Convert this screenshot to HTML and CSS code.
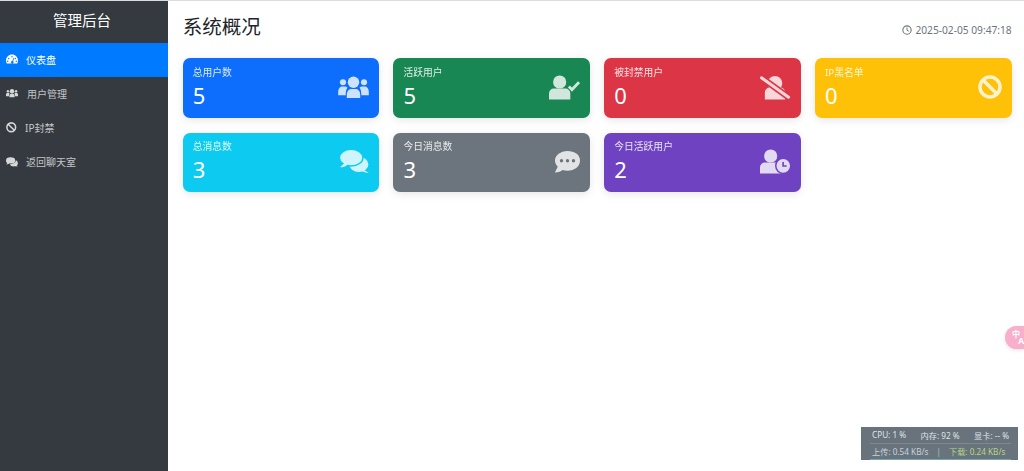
FILE: index.html
```html
<!DOCTYPE html>
<html lang="zh-CN">
<head>
<meta charset="utf-8">
<title>系统概况</title>
<link rel="stylesheet" href="styles.css">
</head>
<body>
<div class="layout">
  <aside class="sidebar">
    <div class="brand">管理后台</div>
    <nav class="nav">
      <a class="nav-item active"><svg class="nav-icon" viewBox="0 0 24 20"><path fill-rule="evenodd" d="M12 1C5.500 1 0 6.500 0 13c0 2.200.6 4.200 1.600 6h20.800c1-1.800 1.600-3.800 1.600-6 0-6.500-5.500-12-12-12zM12 4a1.500 1.500 0 110 3 1.500 1.500 0 010-3zM5.500 7.500a1.500 1.500 0 110 3 1.500 1.500 0 010-3zM18.500 7.500a1.500 1.500 0 110 3 1.500 1.500 0 010-3zM3.500 13a1.500 1.500 0 110 3 1.500 1.500 0 010-3zM20.500 13a1.500 1.500 0 110 3 1.500 1.500 0 010-3zM15 8l1.500.6-2.300 6a2.500 2.500 0 11-1.500-.6z"/></svg><span>仪表盘</span></a>
      <a class="nav-item"><svg class="nav-icon" viewBox="0 0 32 23"><use href="#i-users"/></svg><span class="gap-wide">用户管理</span></a>
      <a class="nav-item"><svg class="nav-icon nav-icon-ban" viewBox="0 0 24 24"><use href="#i-ban"/></svg><span class="gap-narrow">IP封禁</span></a>
      <a class="nav-item"><svg class="nav-icon" viewBox="0 0 30 24"><use href="#i-comments"/></svg><span>返回聊天室</span></a>
    </nav>
  </aside>
  <main class="main">
    <header class="topbar">
      <h1 class="title">系统概况</h1>
      <div class="clock"><svg class="clock-icon" viewBox="0 0 24 24"><circle cx="12" cy="12" r="10" fill="none" stroke="currentColor" stroke-width="2.600"/><path d="M12 6v6.500l4 2.500" fill="none" stroke="currentColor" stroke-width="2.400"/></svg>2025-02-05 09:47:18</div>
    </header>
    <section class="grid">
      <div class="card blue"><div><div class="label">总用户数</div><div class="num">5</div></div><svg class="icon i-users" viewBox="0 0 32 23"><use href="#i-users"/></svg></div>
      <div class="card green"><div><div class="label">活跃用户</div><div class="num">5</div></div><svg class="icon i-wide" viewBox="0 0 32 25"><circle cx="11" cy="6.800" r="6.800"/><path d="M5 13.500h12a5 5 0 015 5V25H0v-6.500a5 5 0 015-5z"/><path d="M20.500 11.500l3.200 3.200L31 7" fill="none" stroke="#fff" stroke-width="3"/></svg></div>
      <div class="card red"><div><div class="label">被封禁用户</div><div class="num">0</div></div><svg class="icon i-wide" viewBox="0 0 32 25"><circle cx="15.500" cy="8" r="7.500"/><path d="M10 12.500h11a5 5 0 015 5V25H5v-7.500a5 5 0 015-5z"/><path d="M1 2l29 21" stroke="#dc3545" stroke-width="6.500" fill="none"/><path d="M1.500 2.500l28 20" stroke="#fff" stroke-width="3.200" fill="none" stroke-linecap="round"/></svg></div>
      <div class="card yellow"><div><div class="label">IP黑名单</div><div class="num">0</div></div><svg class="icon i-ban" viewBox="0 0 24 24"><use href="#i-ban"/></svg></div>
      <div class="card cyan"><div><div class="label">总消息数</div><div class="num">3</div></div><svg class="icon i-comments" viewBox="0 0 30 24"><use href="#i-comments"/></svg></div>
      <div class="card gray"><div><div class="label">今日消息数</div><div class="num">3</div></div><svg class="icon i-dots" viewBox="0 0 25 22"><path fill-rule="evenodd" d="M12.500 0C5.600 0 0 4.300 0 9.500c0 2.300 1 4.300 2.700 6C2.100 17.800.3 20 0 21.500c3.500 0 6-1.300 7.500-2.500 1.500.5 3.200.8 5 .8 6.900 0 12.500-4.300 12.500-10.300S19.400 0 12.500 0zM6.500 8a1.700 1.700 0 110 3.400 1.700 1.700 0 010-3.400zM12.500 8a1.700 1.700 0 110 3.400 1.700 1.700 0 010-3.400zM18.500 8a1.700 1.700 0 110 3.400 1.700 1.700 0 010-3.400z"/></svg></div>
      <div class="card purple"><div><div class="label">今日活跃用户</div><div class="num">2</div></div><svg class="icon i-wide" viewBox="0 0 32 25"><circle cx="11" cy="6.800" r="6.800"/><path d="M5 13.500h12a5 5 0 015 5V25H0v-6.500a5 5 0 015-5z"/><circle cx="24" cy="17" r="8.500" fill="#6f42c1"/><path fill-rule="evenodd" d="M24 10a7 7 0 110 14 7 7 0 010-14zM23 13v5h4.500v-1.700h-2.800V13z"/></svg></div>
    </section>
  </main>
</div>

<svg class="defs" width="0" height="0">
  <defs>
    <g id="i-users"><circle cx="16" cy="6.500" r="6"/><circle cx="5" cy="6.500" r="3.200"/><circle cx="27" cy="6.500" r="3.200"/><path d="M9 23v-3.500C9 15.500 11.500 13.500 14 13.500h4c2.500 0 5 2 5 6V23z"/><path d="M7.800 20H0v-3.500C0 13 2 11 4 11h3c1 0 2 .4 2.600 1-1.100 2-1.800 4-1.800 8zM24.200 20H32v-3.500C32 13 30 11 28 11h-3c-1 0-2 .4-2.600 1 1.100 2 1.800 4 1.800 8z"/></g>
    <g id="i-ban"><circle cx="12" cy="12" r="10" fill="none" stroke="currentColor" stroke-width="3.500"/><path d="M5 5l14 14" stroke="currentColor" stroke-width="3.500"/></g>
    <mask id="bubble-gap"><rect width="30" height="24" fill="#fff"/><ellipse cx="11.500" cy="8" rx="13" ry="9.500" fill="#000"/></mask>
    <g id="i-comments"><ellipse cx="11.500" cy="8" rx="11.500" ry="8"/><path d="M5 13L0 18c3 0 6-1 8-3z"/><g mask="url(#bubble-gap)"><ellipse cx="19.500" cy="15" rx="10" ry="8"/><path d="M24 20l6 4c-3 0-6-.8-8-2.500z"/></g></g>
  </defs>
</svg>

<div class="translate"><span class="translate-cn">中</span><span class="translate-a">A</span></div>

<div class="monitor">
  <div class="monitor-row row-top"><span>CPU: 1 %</span><span>内存: 92 %</span><span>显卡: -- %</span></div>
  <div class="monitor-row row-bottom"><span>上传: 0.54 KB/s</span><span class="sep">|</span><span class="down">下载: 0.24 KB/s</span></div>
</div>
</body>
</html>
```

FILE: styles.css
```css
* { box-sizing: border-box; }
html, body { margin: 0; height: 100%; overflow: hidden; }
body {
  background: #fff;
  border-top: 1px solid #dcdcdc;
  font-family: "Noto Sans", "Noto Sans CJK SC", sans-serif;
  color: #212529;
}
.defs { position: absolute; }
.layout { display: flex; height: 100%; }
.sidebar { width: 168px; flex: none; background: #343a40; color: #fff; }
.brand { height: 42px; display: flex; align-items: center; justify-content: center; font-size: 14.500px; padding: 0 4px 6px 0; }
.nav { display: flex; flex-direction: column; }
.nav-item { height: 34.200px; display: flex; align-items: center; padding: 0 0 2px 6px; font-size: 10px; color: rgba(255,255,255,.72); fill: rgba(255,255,255,.8); }
.nav-item.active { background: #007bff; color: #fff; fill: #fff; }
.nav-icon { width: 12px; height: 10px; margin-right: 8px; flex: none; color: rgba(255,255,255,.8); }
.nav-icon-ban { width: 10.500px; height: 10.500px; }
.gap-wide { margin-left: 1px; }
.gap-narrow { margin-left: .5px; }
.main { flex: 1; padding: 0 12.300px 0 14.700px; min-width: 0; }
.topbar { height: 57px; display: flex; align-items: center; justify-content: space-between; }
.title { margin: 0; padding-bottom: 8px; font-size: 19.500px; font-weight: 400; }
.clock { display: flex; align-items: center; gap: 3px; font-size: 10.200px; color: #6c757d; }
.clock-icon { width: 10px; height: 10px; }
.grid { display: grid; grid-template-columns: repeat(4, 1fr); column-gap: 14px; row-gap: 15px; }
.card { height: 59.500px; border-radius: 7px; padding: 8px 10px 9px; display: flex; justify-content: space-between; align-items: center; color: #fff; box-shadow: 0 2px 8px rgba(0,0,0,.1); }
.label { font-size: 9.800px; line-height: 14px; opacity: .85; }
.num { font-size: 22px; line-height: 28px; margin-top: 1px; }
.icon { fill: #fff; color: #fff; opacity: .8; flex: none; }
.i-users { width: 31px; height: 22px; }
.i-wide { width: 31px; height: 25px; }
.i-ban { width: 24px; height: 24px; }
.i-comments { width: 29px; height: 23px; }
.i-dots { width: 25px; height: 22px; }
.blue { background: #0d6efd; }
.green { background: #198754; }
.red { background: #dc3545; }
.yellow { background: #ffc107; }
.cyan { background: #0dcaf0; }
.gray { background: #6c757d; }
.purple { background: #6f42c1; }
.translate { position: fixed; right: 0; top: 326px; width: 19px; height: 23px; overflow: hidden; border-radius: 12px 0 0 12px; background: #f7afcb; color: #fff; font-weight: 700; box-shadow: 0 1px 4px rgba(0,0,0,.12); padding: 3px 0 0 7px; }
.translate-cn { display: block; font-size: 8px; line-height: 9px; }
.translate-a { display: block; margin: -2px 0 0 6px; font-size: 9px; line-height: 10px; }
.monitor { position: fixed; left: 861px; top: 427px; width: 157px; height: 33px; background: #69737c; color: #dfe5ea; font-size: 8.200px; padding: 0 9px 0 11px; white-space: nowrap; }
.monitor-row { display: flex; height: 16.500px; align-items: center; }
.row-top { justify-content: space-between; border-bottom: 1px solid #7d8a92; margin: 0 -2px; padding: 0 2px; }
.row-bottom { gap: 8px; border-bottom: 1px solid #72a6ad; margin: 0 -2px; padding: 0 2px; color: #c6d2dc; }
.sep { color: #9fc6c9; }
.down { color: #b6d486; }
```
